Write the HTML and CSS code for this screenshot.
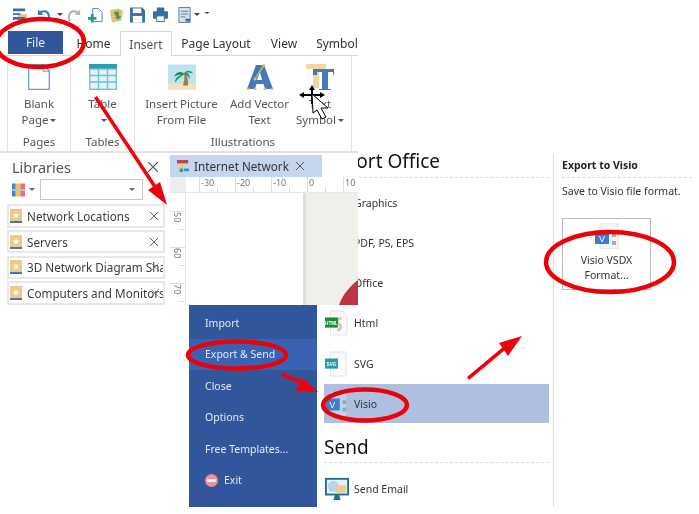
FILE: index.html
```html
<!DOCTYPE html>
<html lang="en">
<head>
<meta charset="utf-8">
<title>Export to Visio</title>
<link rel="stylesheet" href="styles.css">
</head>
<body>
<main class="collage">

  <section class="backstage">
    <nav class="side">
      <div class="side-item">Import</div>
      <div class="side-item active">Export &amp; Send</div>
      <div class="side-item">Close</div>
      <div class="side-item">Options</div>
      <div class="side-item">Free Templates...</div>
      <div class="side-item exit">
        <svg class="exit-icon" viewBox="0 0 12 12"><circle cx="6" cy="6" r="6" fill="#ee8f9c"/><rect x="2" y="4.800" width="8" height="2.400" fill="#fff"/></svg>
        Exit
      </div>
    </nav>
    <div class="formats">
      <h2 class="fmt-head">Export Office</h2>
      <div class="fmt-row"><span class="fmt-icon"></span>Graphics</div>
      <div class="fmt-row"><span class="fmt-icon"></span>PDF, PS, EPS</div>
      <div class="fmt-row"><span class="fmt-icon"></span>Office</div>
      <div class="fmt-row">
        <svg class="fmt-icon" viewBox="0 0 26 28"><path d="M6 1h13l5 5v21H6z" fill="#fafafa" stroke="#e2e2e2"/><path d="M18 9c-5 0-6 4-3 6s3 6-2 7" fill="none" stroke="#c9c9c9" stroke-width="3"/><rect x="0" y="8" width="14" height="11" fill="#1b8f3a"/><text x="7" y="16" class="mini">HTML</text></svg>
        Html
      </div>
      <div class="fmt-row shifted">
        <svg class="fmt-icon" viewBox="0 0 26 28"><path d="M6 1h17v26H6z" fill="#fafafa" stroke="#e2e2e2"/><rect x="0" y="8" width="14" height="11" fill="#1f9fa8"/><text x="7" y="16" class="mini">SVG</text></svg>
        SVG
      </div>
      <div class="fmt-row selected">
        <svg class="fmt-icon" viewBox="0 0 26 28"><path d="M6 1h17v26H6z" fill="#c3d2ea"/><rect x="0" y="8" width="16" height="13" fill="#3f7ccb"/><text x="8" y="18" class="mini-v">V</text><rect x="19" y="10" width="4" height="4" fill="#93a5c4"/><rect x="19" y="18" width="4" height="4" fill="#93a5c4"/></svg>
        Visio
      </div>
      <h2 class="fmt-head send-head">Send</h2>
      <div class="fmt-row">
        <svg class="fmt-icon" viewBox="0 0 26 24"><rect x="1" y="1" width="24" height="17" fill="#e9f1f8" stroke="#1f6f9e" stroke-width="2"/><circle cx="9" cy="9" r="6" fill="#bcd3e8"/><rect x="11" y="8" width="12" height="8" fill="#edca92"/><path d="M9 24l2-6h4l2 6z" fill="#1f6f9e"/></svg>
        Send Email
      </div>
    </div>
    <aside class="detail">
      <h3 class="detail-head">Export to Visio</h3>
      <p class="detail-text">Save to Visio file format.</p>
      <div class="vsdx">
        <svg class="vsdx-icon" viewBox="0 0 24 26"><path d="M5 0h18v26H5z" fill="#f4f4f4" stroke="#e4e4e4"/><rect x="0" y="9" width="14" height="12" fill="#3f7ccb"/><text x="7" y="18.500" class="mini-v">V</text><rect x="17" y="10" width="4" height="4" fill="#aaa"/><rect x="17" y="18" width="4" height="4" fill="#aaa"/></svg>
        <span>Visio VSDX</span>
        <span>Format...</span>
      </div>
    </aside>
  </section>

  <section class="ribbon-win">
    <div class="qat">
      <svg class="qi" viewBox="0 0 16 16"><rect x="5" y="7" width="10" height="9" fill="#f0c27a"/><path d="M0 1h13v3H0zM0 6h8v2H0zM0 10h13v3H0z" fill="#3f6fa8"/></svg>
      <svg class="qi undo" viewBox="0 0 16 16"><path d="M2 2v6h6L6 6c3-2 6-1 7 4l-1 5h2c2-5 1-11-4-12-2-.5-4 0-6 1z" fill="#2f7fc0"/></svg>
      <span class="qcaret"></span>
      <svg class="qi" viewBox="0 0 16 16"><path d="M14 2v6H8l2-2C7 4 4 5 3 10l1 5H2C0 10 1 4 6 3c2-.5 4 0 6 1z" fill="#b5b5b5"/></svg>
      <svg class="qi" viewBox="0 0 16 16"><path d="M5 1h6l4 4v10H5z" fill="#fff" stroke="#4a7fb5"/><path d="M0 10h3V7h3v3h3v3H6v3H3v-3H0z" fill="#1aa57c"/></svg>
      <svg class="qi" viewBox="0 0 16 16"><path d="M1 3l9-2 5 3-2 10-10 2z" fill="#edbb6a"/><path d="M5 5l5-1 1 5 2 0-3 4-4-3 2 0z" fill="#3c9a62"/></svg>
      <svg class="qi" viewBox="0 0 16 16"><path d="M0 0h13l3 3v13H0z" fill="#3a6ea5"/><rect x="3" y="1" width="9" height="5" fill="#fff"/><rect x="3" y="9" width="10" height="7" fill="#fff"/></svg>
      <svg class="qi print" viewBox="0 0 16 16"><rect x="4" y="0" width="8" height="5" fill="#3a6ea5"/><rect x="0" y="4" width="16" height="8" rx="1" fill="#3a6ea5"/><rect x="4" y="9" width="8" height="6" fill="#fff" stroke="#3a6ea5"/></svg>
      <svg class="qi pages" viewBox="0 0 16 16"><path d="M2 0h12v16H2z" fill="#d5e2f0" stroke="#5a7ea6"/><path d="M4 4h8M4 7h8M4 10h5" stroke="#5a7ea6"/><path d="M9 12h5v3H9z" fill="#3a6ea5"/></svg>
      <span class="qcaret end"></span>
      <span class="qcustom"></span>
    </div>
    <div class="tabs">
      <div class="tab file">File</div>
      <div class="tab home">Home</div>
      <div class="tab insert">Insert</div>
      <div class="tab layout">Page Layout</div>
      <div class="tab view">View</div>
      <div class="tab symbol">Symbol</div>
    </div>
    <div class="ribbon">
      <div class="group g-pages">
        <div class="tools">
          <div class="tool">
            <svg class="tool-icon" viewBox="0 0 22 26"><path d="M.7.7h15l5.600 6v18.600H.7z" fill="#fff" stroke="#6f9ac8" stroke-width="1.300"/><path d="M15 .7v6.500h6" fill="none" stroke="#6f9ac8"/></svg>
            <span>Blank</span><span>Page<i class="caret"></i></span>
          </div>
        </div>
        <div class="group-label">Pages</div>
      </div>
      <div class="group g-tables">
        <div class="tools">
          <div class="tool">
            <svg class="tool-icon wide" viewBox="0 0 28 26"><rect width="28" height="5" fill="#2e9cb3"/><rect x=".7" y="5" width="26.600" height="20.300" fill="#e3f3f6" stroke="#6cc0d0" stroke-width="1.300"/><path d="M9.500 5v20M18.500 5v20M1 11.500h26M1 18h26" stroke="#6cc0d0" stroke-width="1.300"/></svg>
            <span>Table</span><span class="caret-line"><i class="caret"></i></span>
          </div>
        </div>
        <div class="group-label">Tables</div>
      </div>
      <div class="group g-illus">
        <div class="tools">
          <div class="tool t-pic">
            <svg class="tool-icon wide" viewBox="0 0 28 25"><rect width="28" height="25" fill="#bfe3ee"/><rect y="19" width="28" height="6" fill="#f1e3bd"/><path d="M15 21c1-5 2-8 1-12l2 0c2 4 2 8 2 12z" fill="#a8764f"/><path d="M16 9c-4-3-8-1-10 3 3-1 5-2 7-1-3 0-6 3-6 7 3-4 6-6 9-8 3 0 5 2 6 5 0-4-1-6-4-7 3 0 5 0 7 1-2-3-6-4-9 0z" fill="#1f9068"/></svg>
            <span>Insert Picture</span><span>From File</span>
          </div>
          <div class="tool t-vec">
            <svg class="tool-icon wide" viewBox="0 0 28 26"><path d="M10 1h8l9 24h-8l-1.500-5h-7L9 25H1z" fill="#4379b8"/><path d="M14 8l-3 8h5z" fill="#fff"/><path d="M18 1L9 15" stroke="#c9b377" stroke-width="1.500"/><g fill="#e6b765"><circle cx="18" cy="1.500" r="1.500"/><circle cx="9" cy="15" r="1.500"/><circle cx="2" cy="25" r="1.500"/><circle cx="9" cy="25" r="1.500"/><circle cx="19" cy="25" r="1.500"/><circle cx="26" cy="25" r="1.500"/></g></svg>
            <span>Add Vector</span><span>Text</span>
          </div>
          <div class="tool t-sym">
            <svg class="tool-icon wide" viewBox="0 0 28 26"><path d="M0 0h20v5h-7v19H7V5H0z" fill="#f5d79e"/><path d="M7 5h21v6h-1V8h-5v17h3v1h-12v-1h3V8h-5v3H7z" fill="#4379b8"/></svg>
            <span>Text</span><span>Symbol<i class="caret"></i></span>
          </div>
        </div>
        <div class="group-label">Illustrations</div>
      </div>
    </div>
  </section>

  <section class="libraries">
    <div class="lib-title"><span>Libraries</span><svg class="x big" viewBox="0 0 10 10"><path d="M0 0l10 10M10 0L0 10"/></svg></div>
    <div class="lib-search">
      <svg class="lib-icon" viewBox="0 0 14 14"><rect width="4" height="14" fill="#3f86c9"/><rect x="4" width="5" height="14" fill="#f2c14e"/><rect x="9" width="5" height="14" fill="#e8707a"/><rect y="6" width="14" height="2" fill="#9fd1ea"/></svg>
      <span class="small-caret"></span>
      <div class="combo"><span class="small-caret"></span></div>
      <svg class="search" viewBox="0 0 8 12"><path d="M7 2a5 5 0 0 0 0 8" fill="none" stroke="#2f7fc0" stroke-width="2"/></svg>
    </div>
    <div class="lib-item">
      <svg class="star" viewBox="0 0 12 14"><rect width="12" height="12" fill="#eec98a"/><rect y="12" width="12" height="2" fill="#3f78b5"/><path d="M6 3l1 2.300 2.400.2-1.800 1.500.6 2.400L6 8l-2.200 1.400.6-2.400L2.600 5.500 5 5.300z" fill="#fff"/></svg>
      <span class="lib-name">Network Locations</span><svg class="x" viewBox="0 0 10 10"><path d="M0 0l10 10M10 0L0 10"/></svg>
    </div>
    <div class="lib-item">
      <svg class="star" viewBox="0 0 12 14"><rect width="12" height="12" fill="#eec98a"/><rect y="12" width="12" height="2" fill="#3f78b5"/><path d="M6 3l1 2.300 2.400.2-1.800 1.500.6 2.400L6 8l-2.200 1.400.6-2.400L2.600 5.500 5 5.300z" fill="#fff"/></svg>
      <span class="lib-name">Servers</span><svg class="x" viewBox="0 0 10 10"><path d="M0 0l10 10M10 0L0 10"/></svg>
    </div>
    <div class="lib-item overflowing">
      <svg class="star" viewBox="0 0 12 14"><rect width="12" height="12" fill="#eec98a"/><rect y="12" width="12" height="2" fill="#3f78b5"/><path d="M6 3l1 2.300 2.400.2-1.800 1.500.6 2.400L6 8l-2.200 1.400.6-2.400L2.600 5.500 5 5.300z" fill="#fff"/></svg>
      <span class="lib-name">3D Network Diagram Shapes</span><svg class="x over" viewBox="0 0 10 10"><path d="M0 0l10 10M10 0L0 10"/></svg>
    </div>
    <div class="lib-item overflowing">
      <svg class="star" viewBox="0 0 12 14"><rect width="12" height="12" fill="#eec98a"/><rect y="12" width="12" height="2" fill="#3f78b5"/><path d="M6 3l1 2.300 2.400.2-1.800 1.500.6 2.400L6 8l-2.200 1.400.6-2.400L2.600 5.500 5 5.300z" fill="#fff"/></svg>
      <span class="lib-name">Computers and Monitors</span><svg class="x over" viewBox="0 0 10 10"><path d="M0 0l10 10M10 0L0 10"/></svg>
    </div>
  </section>

  <section class="canvas-win">
    <div class="doc-bar">
      <div class="doc-tab">
        <svg class="doc-icon" viewBox="0 0 14 14"><rect x="0" y="0" width="13" height="4" fill="#b5474f"/><rect x="5" y="4" width="2" height="6" fill="#e9c35c"/><rect x="2" y="5" width="4" height="4" fill="#f2d05a"/><rect x="3" y="10" width="4" height="4" fill="#3fa46a"/><rect x="8" y="10" width="6" height="3" fill="#2f8fd0"/></svg>
        <span class="doc-name">Internet Network</span>
        <svg class="x" viewBox="0 0 10 10"><path d="M0 0l10 10M10 0L0 10"/></svg>
      </div>
    </div>
    <div class="h-ruler">
      <div class="corner"></div>
      <div class="h-start"></div>
      <div class="h-seg">-30</div>
      <div class="h-seg">-20</div>
      <div class="h-seg">-10</div>
      <div class="h-seg">0</div>
      <div class="h-seg">10</div>
    </div>
    <div class="canvas-body">
      <div class="v-ruler">
        <div class="v-start"></div>
        <div class="v-seg"><span>50</span></div>
        <div class="v-seg"><span>60</span></div>
        <div class="v-seg"><span>70</span></div>
      </div>
      <div class="sheet"></div>
      <div class="sheet-shadow"></div>
      <div class="desk">
        <svg class="desk-art" viewBox="0 0 19 25"><path d="M0 25C4 14 11 6 19 0v25z" fill="#c03346"/></svg>
      </div>
    </div>
  </section>

  <svg class="marks" viewBox="0 0 699 514">
    <g fill="none" stroke="#ee0008" stroke-width="4.500">
      <ellipse cx="40" cy="43" rx="44" ry="24" transform="rotate(-2 40 43)"/>
      <ellipse cx="237" cy="355" rx="49" ry="13.500"/>
      <ellipse cx="365" cy="405" rx="42" ry="15.500"/>
      <ellipse cx="610" cy="262" rx="64" ry="30"/>
    </g>
    <g fill="#f0000c">
      <path d="M94 98l3-2 59 89-3 2z"/>
      <path d="M167 205l-19-15 12-8z"/>
      <path d="M281 376l1-4 22 9-1 4z"/>
      <path d="M318 392l-23-1 8-13z"/>
      <path d="M469 380l-2-3 36-30 2 3z"/>
      <path d="M522 336l-23 7 9 13z"/>
    </g>
    <g>
      <path d="M312 85l3 5h-2v4h7v-2l5 3-5 3v-2h-7v8h-2v-8h-7v2l-5-3 5-3v2h7v-4h-2z" fill="#000"/>
      <path d="M312 94l16 14h-7l5 9-4 2-5-9-4 3z" fill="#fff" stroke="#000"/>
    </g>
  </svg>
</main>
</body>
</html>
```

FILE: styles.css
```css
* { box-sizing: border-box; }
html, body { margin: 0; padding: 0; background: #fff; }
body { font-family: "Noto Sans", "Liberation Sans", sans-serif; font-size: 10.500px; color: #444; }
svg { display: block; flex: none; }
.collage { position: relative; width: 699px; height: 514px; overflow: hidden; background: #fff; filter: blur(.3px); }

/* Backstage */
.backstage { position: absolute; left: 189px; top: 153px; width: 510px; height: 354px; display: flex; }
.side { width: 128px; flex: none; background: #32569c; padding-top: 154px; display: flex; flex-direction: column; color: #e4e9f3; }
.side-item { height: 31.500px; padding-left: 16px; display: flex; align-items: center; gap: 6px; flex: none; white-space: nowrap; }
.side-item.active { background: #3a62b2; }
.exit-icon { width: 13px; height: 13px; }
.formats { width: 237px; padding: 0 4px 0 7px; border-right: 1px solid #dcdcdc; flex: none; color: #333; }
.fmt-head { margin: 0 0 5px; font-size: 19px; font-weight: 400; color: #111; height: 25px; line-height: 17px; white-space: nowrap; border-bottom: 1px dashed #ddd; }
.send-head { height: 40px; line-height: 48px; margin-bottom: 6px; }
.fmt-row { height: 40px; display: flex; align-items: center; gap: 5px; padding-left: 1px; }
.fmt-row.shifted { padding-top: 2px; }
.fmt-row.selected { background: #aebfdf; height: 39px; margin-top: 1px; }
.fmt-icon { display: block; width: 24px; height: 26px; flex: none; }
.mini { font-size: 5px; font-weight: 700; fill: #fff; text-anchor: middle; font-family: "Liberation Sans", sans-serif; }
.mini-v { font-size: 9px; fill: #fff; text-anchor: middle; font-family: "Liberation Sans", sans-serif; }
.detail { flex: 1; padding: 5px 7px 0 8px; color: #333; }
.detail-head { margin: 0; font-size: 10.500px; font-weight: 700; color: #222; height: 20px; border-bottom: 1px dashed #ddd; line-height: 14px; }
.detail-text { margin: 0; height: 40px; padding-top: 5px; line-height: 16px; white-space: nowrap; }
.vsdx { width: 89px; height: 72px; border: 1px solid #bdbdbd; display: flex; flex-direction: column; align-items: center; padding-top: 4px; line-height: 15px; }
.vsdx-icon { width: 24px; height: 26px; margin-bottom: 4px; }

/* Ribbon */
.ribbon-win { position: absolute; left: 0; top: 0; width: 358px; height: 155px; background: #fff; overflow: hidden; display: flex; flex-direction: column; }
.qat { height: 31px; display: flex; align-items: center; padding: 0 0 2px 13px; gap: 6px; flex: none; }
.qi { width: 15px; height: 16px; }
.qi.undo { margin-left: 2px; }
.qi.print { margin-left: 2px; }
.qi.pages { margin-left: 3px; }
.qcaret { width: 0; height: 0; border: 3px solid transparent; border-top: 3px solid #444; border-bottom: 0; margin-right: -2px; }
.qcaret.end { margin-left: -4px; }
.qcustom { width: 6px; height: 6px; border-top: 2px solid #555; border-left: 3px solid transparent; border-right: 3px solid transparent; }
.tabs { height: 25px; display: flex; font-size: 12px; color: #333; flex: none; border-bottom: 1px solid #d8d8d8; }
.tab { display: flex; align-items: center; justify-content: center; flex: none; height: 24px; white-space: nowrap; }
.tab.file { margin-left: 8px; width: 55px; height: 23px; background: #32569c; color: #e9edf6; }
.tab.home { width: 57px; padding-left: 4px; }
.tab.insert { width: 52px; height: 25px; border: 1px solid #d8d8d8; border-bottom: 0; background: #fff; color: #555; }
.tab.layout { width: 88px; }
.tab.view { width: 48px; }
.tab.symbol { width: 58px; }
.ribbon { flex: none; height: 97px; display: flex; border-bottom: 2px solid #e3e3e3; padding-left: 7px; color: #555; }
.group { display: flex; flex-direction: column; border-left: 1px solid #e3e3e3; flex: none; }
.g-pages { width: 63px; }
.g-tables { width: 64px; }
.g-illus { width: 218px; border-right: 1px solid #e3e3e3; }
.tools { height: 77px; display: flex; padding-top: 8px; }
.tool { flex: 1; display: flex; flex-direction: column; align-items: center; line-height: 16px; white-space: nowrap; font-size: 11.500px; }
.tool-icon { width: 22px; height: 26px; margin-bottom: 6px; }
.tool-icon.wide { width: 28px; }
.t-pic { flex: none; width: 93px; }
.t-vec { flex: none; width: 63px; }
.t-sym { flex: none; width: 58px; }
.caret { display: inline-block; width: 0; height: 0; border: 3px solid transparent; border-top: 3px solid #2f5a98; border-bottom: 0; margin-left: 2px; vertical-align: middle; }
.caret-line { display: block; height: 16px; }
.group-label { text-align: center; font-size: 11.500px; line-height: 17px; }

/* Libraries */
.libraries { position: absolute; left: 7px; top: 155px; width: 158px; height: 150px; background: #fff; display: flex; flex-direction: column; font-size: 11.700px; color: #3c3c3c; }
.lib-title { height: 24px; display: flex; justify-content: space-between; align-items: center; font-size: 14.500px; color: #555; padding: 0 7px 0 5px; flex: none; }
.lib-search { height: 25px; display: flex; align-items: center; gap: 4px; padding: 0 0 4px 5px; flex: none; }
.lib-icon { width: 13px; height: 14px; }
.small-caret { width: 0; height: 0; border: 3px solid transparent; border-top: 3px solid #666; border-bottom: 0; flex: none; }
.combo { width: 103px; height: 21px; border: 1px solid #c8c8c8; margin-left: 1px; display: flex; justify-content: flex-end; align-items: center; padding-right: 7px; }
.search { width: 6px; height: 12px; margin-left: 2px; }
.lib-item { height: 23.500px; border: 2px solid #e8e8e8; margin-bottom: 2.300px; display: flex; align-items: center; padding: 0 5px 0 1px; overflow: hidden; flex: none; }
.lib-item.overflowing { padding-right: 0; }
.star { width: 12px; height: 14px; margin-right: 5px; }
.lib-name { white-space: nowrap; flex: 1; min-width: 0; overflow: hidden; }
.x { width: 8px; height: 8px; fill: none; stroke: #555; stroke-width: 1.200; flex: none; }
.x.big { width: 10px; height: 10px; }
.x.over { position: absolute; right: 6px; opacity: .55; }

/* Canvas */
.canvas-win { position: absolute; left: 170px; top: 155px; width: 188px; height: 150px; background: #fff; overflow: hidden; display: flex; flex-direction: column; }
.doc-bar { height: 22px; flex: none; }
.doc-tab { width: 152px; height: 22px; background: #c5d5ee; display: flex; align-items: center; padding-left: 7px; gap: 5px; font-size: 11.700px; color: #333; white-space: nowrap; }
.doc-icon { width: 12px; height: 14px; }
.doc-tab .x { margin-left: 2px; }
.h-ruler { height: 16px; display: flex; flex: none; font-size: 9px; color: #777; border-bottom: 1px solid #e8e8e8; }
.corner { width: 16px; background: #eee; flex: none; }
.h-start { width: 13px; flex: none; }
.h-seg { width: 36px; flex: none; border-left: 1px solid #ddd; padding-left: 1px; line-height: 11px; background: linear-gradient(#ddd, #ddd) 17px 10px / 1px 6px no-repeat; }
.canvas-body { flex: 1; display: flex; min-height: 0; }
.v-ruler { width: 16px; flex: none; border-right: 1px solid #e4e4e4; display: flex; flex-direction: column; font-size: 9px; color: #777; }
.v-start { height: 18px; flex: none; }
.v-seg { height: 36px; flex: none; border-top: 1px solid #ddd; display: flex; background: linear-gradient(#ddd, #ddd) 9px 17px / 7px 1px no-repeat; }
.v-seg span { writing-mode: vertical-rl; line-height: 14px; }
.sheet { width: 117px; background: #fff; flex: none; }
.sheet-shadow { width: 3px; background: #dedede; flex: none; }
.desk { flex: 1; background: #f0f0ea; display: flex; align-items: flex-end; justify-content: flex-end; }
.desk-art { width: 19px; height: 25px; }

/* Annotation layer */
.marks { position: absolute; left: 0; top: 0; width: 699px; height: 514px; pointer-events: none; }
```
